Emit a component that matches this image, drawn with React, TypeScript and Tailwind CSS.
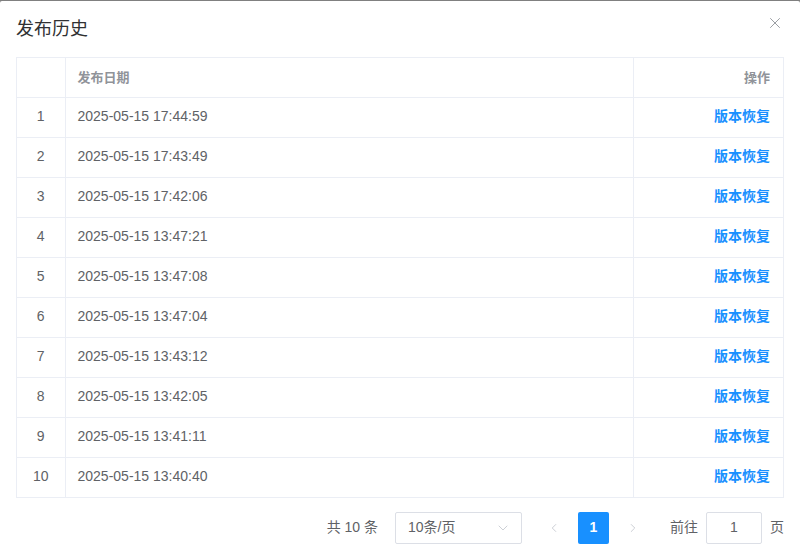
import { X, ChevronDown, ChevronLeft, ChevronRight } from 'lucide-react'

const ROWS = [
  '2025-05-15 17:44:59',
  '2025-05-15 17:43:49',
  '2025-05-15 17:42:06',
  '2025-05-15 13:47:21',
  '2025-05-15 13:47:08',
  '2025-05-15 13:47:04',
  '2025-05-15 13:43:12',
  '2025-05-15 13:42:05',
  '2025-05-15 13:41:11',
  '2025-05-15 13:40:40',
]

export default function App() {
  return (
    <div
      className="h-[560px] w-[800px] overflow-hidden bg-[#808080]"
      style={{ fontFamily: '"Liberation Sans", Arial, "Noto Sans CJK SC", sans-serif' }}
    >
      <div className="mt-px flex h-[559px] flex-col rounded-t-[2px] bg-white">
        <div className="relative flex h-[56px] items-center px-4">
          <h2 className="text-[18px] leading-6 text-[#303133]">发布历史</h2>
          <button className="absolute right-[16px] top-[13px] text-[#909399]">
            <X size={18} strokeWidth={1.2} />
          </button>
        </div>

        <div className="mx-4 border border-[#ebeef5] border-b-0">
          <table className="w-full table-fixed border-collapse text-[14px]">
            <colgroup>
              <col className="w-[48px]" />
              <col />
              <col className="w-[150px]" />
            </colgroup>
            <thead>
              <tr className="h-[39px] border-b border-[#ebeef5] text-[13px] font-bold text-[#909399]">
                <th className="border-r border-[#ebeef5]" />
                <th className="border-r border-[#ebeef5] pl-3 text-left">发布日期</th>
                <th className="pr-[13px] text-right">操作</th>
              </tr>
            </thead>
            <tbody className="text-[#606266]">
              {ROWS.map((date, i) => (
                <tr key={date} className="h-[40px] border-b border-[#ebeef5]">
                  <td className="border-r border-[#ebeef5] pb-px text-center">{i + 1}</td>
                  <td className="border-r border-[#ebeef5] pb-px pl-3">{date}</td>
                  <td className="pb-px pr-[13px] text-right font-bold text-[#1890ff]">版本恢复</td>
                </tr>
              ))}
            </tbody>
          </table>
        </div>

        <div className="mt-[14px] flex items-center justify-end pr-4 text-[14px] text-[#606266]">
          <span className="mr-[17px]">共 10 条</span>
          <div className="flex h-[32px] w-[127px] items-center justify-between rounded-[2px] border border-[#dcdfe6] pl-3 pr-[10px]">
            <span>10条/页</span>
            <ChevronDown size={16} strokeWidth={1.2} className="text-[#c0c4cc]" />
          </div>
          <div className="ml-[16px] flex items-center">
            <button className="flex h-[32px] w-[32px] items-center justify-center text-[#c0c4cc]">
              <ChevronLeft size={14} strokeWidth={1.4} />
            </button>
            <button className="mx-[8px] flex h-[32px] w-[31px] items-center justify-center rounded-[2px] bg-[#1890ff] font-bold text-white">
              1
            </button>
            <button className="flex h-[32px] w-[32px] items-center justify-center text-[#c0c4cc]">
              <ChevronRight size={14} strokeWidth={1.4} />
            </button>
          </div>
          <span className="ml-[21px]">前往</span>
          <div className="ml-2 flex h-[32px] w-[56px] items-center justify-center rounded-[2px] border border-[#dcdfe6]">
            1
          </div>
          <span className="ml-2">页</span>
        </div>
      </div>
    </div>
  )
}
